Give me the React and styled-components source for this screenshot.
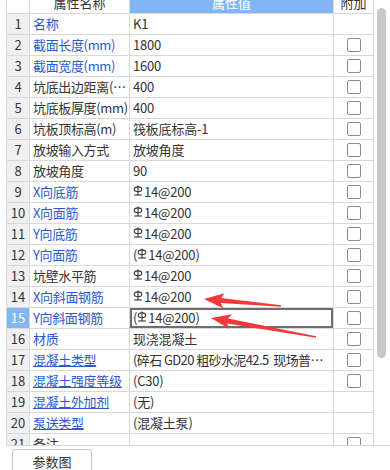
import styled, { createGlobalStyle } from 'styled-components'

const GlobalStyle = createGlobalStyle`
  html, body {
    margin: 0;
    padding: 0;
    background: #ffffff;
  }
  body {
    font-family: "Noto Sans CJK SC", "Noto Sans", sans-serif;
    font-size: 13px;
    color: #333333;
  }
`

// Página inteira: grade de propriedades em cima, botão embaixo
const Page = styled.div`
  position: relative;
  width: 390px;
  height: 470px;
  overflow: hidden;
  background: #ffffff;
`

const GridArea = styled.div`
  display: flex;
  margin-left: 6px;
  height: 445px;
  border-bottom: 1px solid #d9d9d9;
`

const Viewport = styled.div`
  width: 367px;
  height: 445px;
  overflow: hidden;
  border-left: 1px solid #d9d9d9;
`

const Table = styled.div`
  display: grid;
  grid-template-columns: 23px 100px 204px 40px;
  grid-auto-rows: 21px;
  margin-top: -7px;
`

const Cell = styled.div`
  box-sizing: border-box;
  border-right: 1px solid #d9d9d9;
  border-bottom: 1px solid #d9d9d9;
  line-height: 20px;
  white-space: pre;
  overflow: hidden;
  text-overflow: ellipsis;
`

const HeadCell = styled(Cell)`
  text-align: center;
  background: ${(p) => (p.$active ? '#80b6f3' : '#ffffff')};
  color: ${(p) => (p.$active ? '#ffffff' : '#333333')};
`

const NumCell = styled(Cell)`
  text-align: center;
  background: ${(p) => (p.$selected ? '#80b6f3' : '#f0f0f0')};
  color: ${(p) => (p.$selected ? '#ffffff' : '#333333')};
`

const NameCell = styled(Cell)`
  padding-left: 3px;
  letter-spacing: -0.35px;
  color: ${(p) => (p.$blue ? '#2b58cf' : '#333333')};
  text-decoration: ${(p) => (p.$link ? 'underline' : 'none')};
`

const ValueCell = styled(Cell)`
  padding-left: 3px;
  padding-right: 6px;
  letter-spacing: ${(p) => (p.$tight ? '-0.6px' : '-0.2px')};
  box-shadow: ${(p) => (p.$focused ? 'inset 0 0 0 2px #6e6e6e' : 'none')};
`

const CheckCell = styled(Cell)`
  display: flex;
  align-items: center;
  justify-content: center;
`

const Checkbox = styled.span`
  box-sizing: border-box;
  width: 14px;
  height: 14px;
  border: 1px solid #8c8c8c;
  border-radius: 2px;
  background: #ffffff;
`

const ScrollTrack = styled.div`
  width: 16px;
  padding-top: 8px;
  box-sizing: border-box;
  background: #ffffff;
`

const Thumb = styled.div`
  width: 9px;
  height: 350px;
  margin-left: 3px;
  border-radius: 5px;
  background: #c8c8c8;
`

const Footer = styled.div`
  display: flex;
  padding: 3px 0 0 12px;
`

const Button = styled.button`
  width: 80px;
  height: 26px;
  padding: 0;
  border: 1px solid #c9c9c9;
  border-radius: 3px;
  background: #fdfdfd;
  font-family: "Noto Sans CJK SC", "Noto Sans", sans-serif;
  font-size: 13px;
  color: #333333;
  line-height: 20px;
  text-align: center;
  align-self: flex-start;
`

const RebarIcon = styled.svg`
  width: 10px;
  height: 11px;
  margin-right: 1px;
  vertical-align: 1px;
`

const Overlay = styled.svg`
  position: absolute;
  left: 0;
  top: 0;
  width: 390px;
  height: 470px;
  pointer-events: none;
`

// Símbolo de aço HRB400
function Rebar() {
  return (
    <RebarIcon viewBox="0 0 10 11">
      <ellipse cx="5" cy="4.3" rx="3.8" ry="2.4" fill="none" stroke="#333" strokeWidth="1.1" />
      <line x1="5" y1="0.5" x2="5" y2="10" stroke="#333" strokeWidth="1.1" />
      <line x1="1.2" y1="10" x2="8.8" y2="10" stroke="#333" strokeWidth="1.1" />
    </RebarIcon>
  )
}

const bar = (paren) => (
  <>
    {paren && '('}
    <Rebar />
    14@200
    {paren && ')'}
  </>
)

const rows = [
  { name: '名称', blue: true, value: 'K1', check: false },
  { name: '截面长度(mm)', blue: true, value: '1800', check: true },
  { name: '截面宽度(mm)', blue: true, value: '1600', check: true },
  { name: '坑底出边距离(mm)', value: '400', check: true },
  { name: '坑底板厚度(mm)', value: '400', check: true },
  { name: '坑板顶标高(m)', value: '筏板底标高-1', check: true },
  { name: '放坡输入方式', value: '放坡角度', check: true },
  { name: '放坡角度', value: '90', check: true },
  { name: 'X向底筋', blue: true, value: bar(false), check: true },
  { name: 'X向面筋', blue: true, value: bar(false), check: true },
  { name: 'Y向底筋', blue: true, value: bar(false), check: true },
  { name: 'Y向面筋', blue: true, value: bar(true), check: true },
  { name: '坑壁水平筋', value: bar(false), check: true },
  { name: 'X向斜面钢筋', blue: true, value: bar(false), check: true },
  { name: 'Y向斜面钢筋', blue: true, value: bar(true), check: true, selected: true },
  { name: '材质', blue: true, value: '现浇混凝土', check: true },
  { name: '混凝土类型', blue: true, link: true, value: '(碎石 GD20 粗砂水泥42.5  现场普通混凝土)', check: true, tight: true },
  { name: '混凝土强度等级', blue: true, link: true, value: '(C30)', check: true },
  { name: '混凝土外加剂', blue: true, link: true, value: '(无)', check: false },
  { name: '泵送类型', blue: true, link: true, value: '(混凝土泵)', check: false },
  { name: '备注', value: '', check: true },
]

// Seta vermelha de anotação: ponta fina na cauda, cabeça larga
function arrowPoints(tip, tail, headLen, headW, neckW, tailW) {
  const dx = tail[0] - tip[0]
  const dy = tail[1] - tip[1]
  const len = Math.hypot(dx, dy)
  const ux = dx / len
  const uy = dy / len
  const px = -uy
  const py = ux
  const at = (d, w) => [tip[0] + ux * d + px * w, tip[1] + uy * d + py * w]
  const pts = [
    tip,
    at(headLen + 3, headW),
    at(headLen, neckW),
    at(len, tailW),
    at(len, -tailW),
    at(headLen, -neckW),
    at(headLen + 3, -headW),
  ]
  return pts.map((p) => p.map((v) => v.toFixed(1)).join(',')).join(' ')
}

export default function App() {
  return (
    <Page>
      <GlobalStyle />
      <GridArea>
        <Viewport>
          <Table>
            <HeadCell />
            <HeadCell>属性名称</HeadCell>
            <HeadCell $active>属性值</HeadCell>
            <HeadCell>附加</HeadCell>
            {rows.map((r, i) => (
              <Row key={i} index={i + 1} row={r} />
            ))}
          </Table>
        </Viewport>
        <ScrollTrack>
          <Thumb />
        </ScrollTrack>
      </GridArea>
      <Footer>
        <Button>参数图</Button>
      </Footer>
      <Overlay viewBox="0 0 390 470">
        <polygon points={arrowPoints([204, 299], [281, 306], 17, 7.5, 2.6, 0.8)} fill="#ef3a3a" />
        <polygon points={arrowPoints([211, 318], [316, 337], 17, 7.5, 2.6, 0.8)} fill="#ef3a3a" />
      </Overlay>
    </Page>
  )
}

function Row({ index, row }) {
  return (
    <>
      <NumCell $selected={row.selected}>{index}</NumCell>
      <NameCell $blue={row.blue} $link={row.link}>{row.name}</NameCell>
      <ValueCell $focused={row.selected} $tight={row.tight}>{row.value}</ValueCell>
      <CheckCell>{row.check && <Checkbox />}</CheckCell>
    </>
  )
}
